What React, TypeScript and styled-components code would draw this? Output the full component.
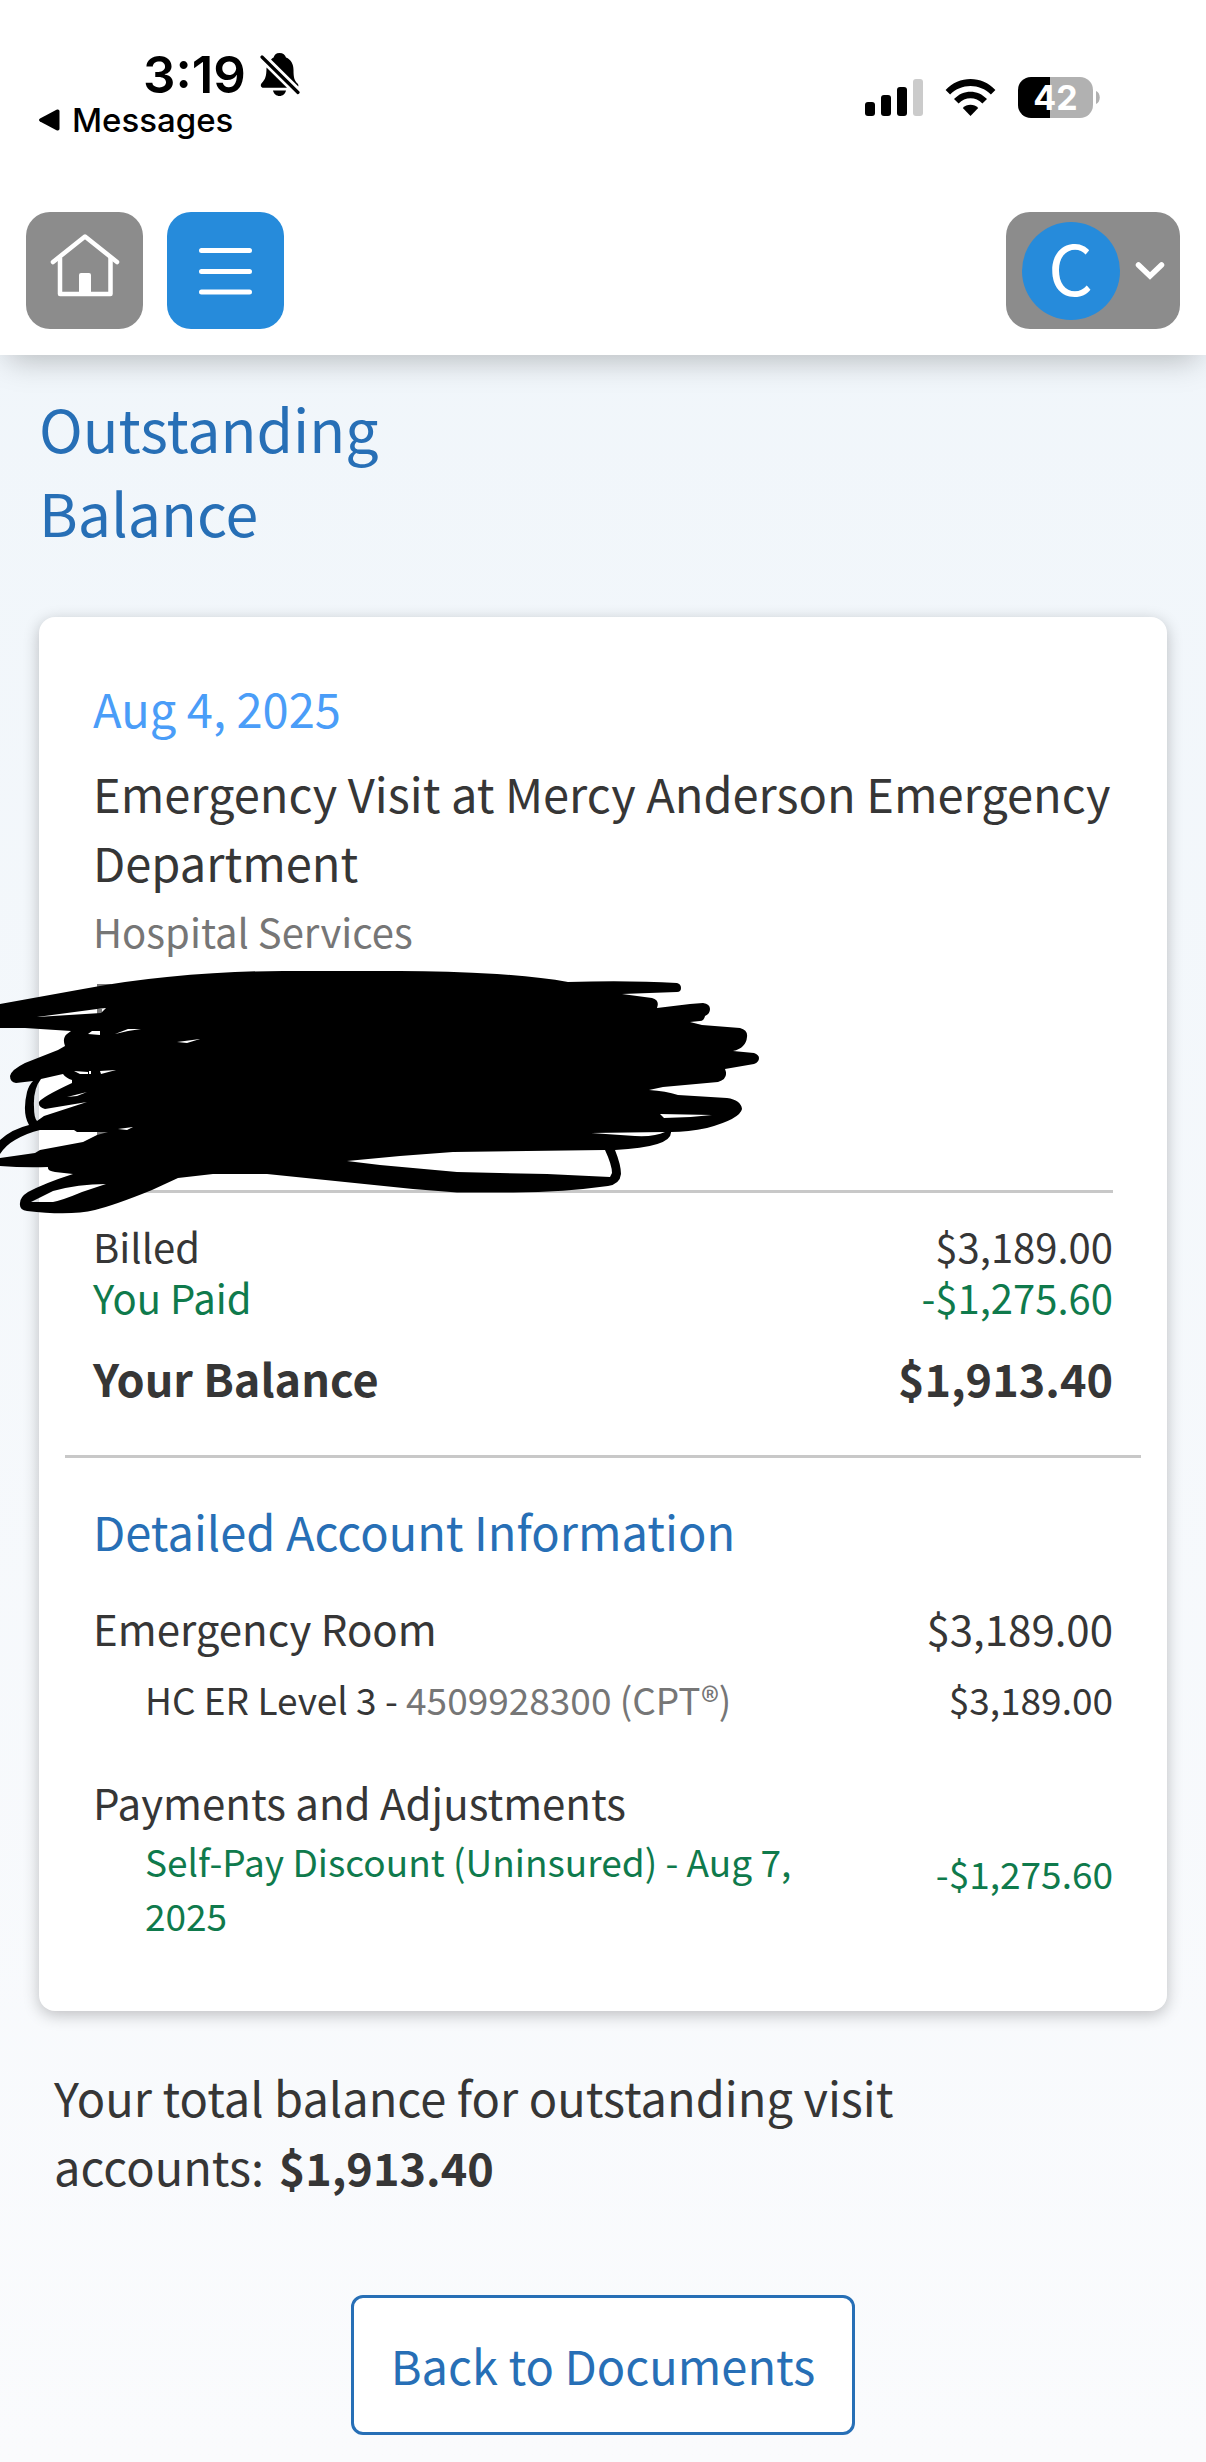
import React from "react";
import styled, { createGlobalStyle } from "styled-components";

const color = {
  ink: "#363636",
  muted: "#767676",
  link: "#276fb6",
  date: "#4a9df8",
  credit: "#0f7a4c",
  rule: "#c8c8c8",
  brand: "#268bdb",
  grey: "#8c8c8c",
};

const Global = createGlobalStyle`
  *, *::before, *::after { box-sizing: border-box; }
  html { background: #fafbfd; }
  body {
    margin: 0;
    color: ${color.ink};
    font-family: "Noto Sans CJK SC", "Open Sans", sans-serif;
    font-size: 40px;
  }
  button { font: inherit; color: inherit; cursor: pointer; }
  h1, h2, h3, p { margin: 0; font-weight: 400; }
`;

const Page = styled.div`
  min-height: 100vh;
  padding-bottom: 28px;
  overflow-x: hidden;
  background: linear-gradient(#eff5fa, #fafbfd);
`;

const Top = styled.header`
  position: relative;
  background: #fff;
  padding-bottom: 26px;
  box-shadow: 0 12px 30px -8px rgba(0, 0, 0, 0.26);
`;

const StatusBar = styled.div`
  display: flex;
  justify-content: space-between;
  padding: 48px 106px 66px 39px;
  color: #000;
  font-family: Inter, "Liberation Sans", sans-serif;
`;

const Clock = styled.div`
  display: flex;
  align-items: center;
  gap: 14px;
  padding-left: 104px;
  font-size: 51px;
  line-height: 54px;
  font-weight: 600;
`;

const BackLink = styled.button`
  display: flex;
  align-items: center;
  gap: 12px;
  padding: 0;
  border: 0;
  background: none;
  color: #000;
  font-size: 33px;
  line-height: 36px;
  font-weight: 500;
`;

const StatusIcons = styled.div`
  display: flex;
  align-items: center;
  gap: 22px;
  height: 98px;
`;

const Battery = styled.div`
  display: flex;
  align-items: center;
  gap: 3px;
`;

const Charge = styled.span`
  width: 75px;
  height: 41px;
  border-radius: 13px;
  background: linear-gradient(90deg, #000 43%, #b1b1b1 43%);
  color: #fff;
  font-size: 34px;
  line-height: 41px;
  font-weight: 700;
  text-align: center;
`;

const Nav = styled.nav`
  display: flex;
  gap: 24px;
  padding: 0 26px;
`;

const Tile = styled.button<{ $fill: string }>`
  display: flex;
  align-items: center;
  justify-content: center;
  width: 117px;
  height: 117px;
  padding: 0;
  border: 0;
  border-radius: 24px;
  background: ${(p) => p.$fill};
`;

const Account = styled(Tile)`
  width: 174px;
  gap: 15px;
  margin-left: auto;
`;

const Avatar = styled.span`
  width: 98px;
  height: 98px;
  border-radius: 50%;
  background: ${color.brand};
  color: #fff;
  font-size: 70px;
  line-height: 88px;
`;

const Main = styled.main`
  padding: 31px 39px 0;
`;

const Title = styled.h1`
  max-width: 400px;
  margin-bottom: 63px;
  color: ${color.link};
  font-size: 59px;
  line-height: 84px;
`;

const Card = styled.section`
  padding: 56px 26px 69px;
  border-radius: 16px;
  background: #fff;
  box-shadow: 0 4px 16px rgba(0, 0, 0, 0.24);
`;

const Block = styled.div`
  padding: 0 28px;
`;

const Large = styled.h2<{ $tone?: string }>`
  color: ${(p) => p.$tone ?? color.ink};
  font-size: 47px;
  line-height: 69px;
`;

const VisitDate = styled(Large).attrs({ as: "p" })`
  margin-bottom: 16px;
`;

const Service = styled.p`
  margin-top: 9px;
  color: ${color.muted};
  line-height: 52px;
`;

const Redacted = styled.div`
  position: relative;
  height: 233px;
`;

const Scribble = styled.svg`
  position: absolute;
  left: -93px;
  top: 8px;
  pointer-events: none;
`;

const Rule = styled.hr`
  height: 3px;
  margin: 0;
  border: 0;
  background: ${color.rule};
`;

const Summary = styled.table`
  width: 100%;
  margin: 28px 0 43px;
  border-collapse: collapse;
`;

const Details = styled.table`
  width: 100%;
  margin-top: 33px;
  border-collapse: collapse;
`;

type Size = "base" | "total" | "group" | "item";

const sizes: Record<Size, string> = {
  base: "font-size: 40px; line-height: 51px;",
  total: "font-size: 45px; line-height: 69px; font-weight: 600;",
  group: "font-size: 42px; line-height: 60px;",
  item: "font-size: 37px; line-height: 54px;",
};

const Row = styled.tr<{ $size: Size; $tone?: string; $above: number; $drop: number }>`
  color: ${(p) => p.$tone ?? color.ink};
  font-weight: 400;
  ${(p) => sizes[p.$size]}
  th {
    padding: ${(p) => p.$above}px 0 0;
    padding-left: ${(p) => (p.$size === "item" ? 52 : 0)}px;
    padding-right: ${(p) => (p.$size === "item" ? 100 : 0)}px;
    font-weight: inherit;
    text-align: left;
  }
  td {
    padding: ${(p) => p.$above + p.$drop}px 0 0;
    text-align: right;
    vertical-align: top;
    white-space: nowrap;
  }
`;

const Code = styled.span`
  color: ${color.muted};
`;

const DetailsHeading = styled(Large)`
  margin-top: 38px;
`;

const Total = styled.p`
  max-width: 900px;
  margin: 51px 0 94px;
  padding: 0 15px;
  font-size: 47px;
  line-height: 69px;
`;

const Strong = styled.strong`
  margin-left: 4px;
  font-size: 45px;
  font-weight: 600;
`;

const BackButton = styled.button`
  display: block;
  margin: 0 auto;
  padding: 0 37px;
  border: 3px solid ${color.link};
  border-radius: 12px;
  background: #fff;
  color: ${color.link};
  font-size: 47px;
  line-height: 134px;
`;

const BellOff = () => (
  <svg width="40" height="44" viewBox="0 0 40 44" aria-label="Silent mode" role="img">
    <path d="M19.500 0c3.600 0 5.700 2 6.500 4.500 5 2 7.500 6.500 7.500 12.500 0 8 1 10.500 4 13.500 1 1 1 2 .8 3L11 6.500c1-1 1.700-1.600 2.600-2C14.400 2 16 0 19.500 0Z" />
    <path d="M6.500 14.500 27 34.800H3.500C.8 34.800 0 32 1.800 30c3.400-3.500 4.700-6.500 4.700-15.500Z" />
    <path d="M13 37.500h13c-.7 3.300-3.300 5.500-6.500 5.500s-5.800-2.200-6.500-5.500Z" />
    <path d="M2 4l36 35.500" stroke="#000" strokeWidth="3.200" strokeLinecap="round" />
  </svg>
);

const BackArrow = () => (
  <svg width="21" height="22" viewBox="0 0 21 22" aria-hidden="true">
    <path d="M1 9.500 17.500.8c1.800-.8 3 0 3 1.700v17c0 1.700-1.200 2.500-3 1.700L1 12.500c-1.300-.8-1.300-2.200 0-3Z" />
  </svg>
);

const Signal = () => (
  <svg width="58" height="39" viewBox="0 0 58 39" aria-label="Signal" role="img">
    <rect x="0" y="24" width="10" height="14" rx="3" />
    <rect x="16" y="17" width="10" height="21" rx="3" />
    <rect x="32" y="9" width="10" height="29" rx="3" />
    <rect x="48" y="1" width="10" height="37" rx="3" fill="#cbcbcb" />
  </svg>
);

const Wifi = () => (
  <svg width="51" height="39" viewBox="0 0 51 39" aria-label="Wi-Fi" role="img">
    <path d="M.6 12C14-2.800 37-2.800 50.400 12l-4.500 4.600c-11.200-11.500-29.600-11.500-40.800 0Z" />
    <path d="M9 21c9.200-9.800 23.800-9.800 33 0l-4.600 4.600c-6.500-7-17.300-7-23.800 0Z" />
    <path d="M17.800 30c4-4.400 11.400-4.400 15.400 0L25.500 38Z" />
  </svg>
);

const BatteryTip = () => (
  <svg width="4" height="13" viewBox="0 0 4 13" aria-hidden="true">
    <path d="M0 0c5 2 5 11 0 13Z" fill="#b1b1b1" />
  </svg>
);

const House = () => (
  <svg width="70" height="76" viewBox="0 0 70 76" fill="none" stroke="#fff" strokeLinecap="round" strokeLinejoin="round">
    <path d="M3 29 35 3.500 67 29" strokeWidth="4.500" />
    <path d="M10 25v36h50.500V25" strokeWidth="4.500" />
    <path d="M31 42h8v18h-8Z" fill="#fff" strokeWidth="4" />
  </svg>
);

const Bars = () => (
  <svg width="53" height="48" viewBox="0 0 53 48" stroke="#fff" strokeWidth="5" strokeLinecap="round">
    <path d="M2.500 3.500h48M2.500 24.500h48M2.500 45h48" />
  </svg>
);

const Chevron = () => (
  <svg width="30" height="20" viewBox="0 0 30 20" fill="none" stroke="#fff" strokeWidth="5.500" strokeLinecap="round">
    <path d="M3.500 4 15 15 26.500 4" />
  </svg>
);

const Marker = () => (
  <Scribble width="762" height="252" viewBox="0 965 762 252" role="img" aria-label="Redacted details">
    <path d="M97 984h14v3H97zM97 1009h5v8H97zM97 1131h12v4H97z" fill="#777" />
    <path
      fillRule="evenodd"
      d="M0 1004 83 989Q125 981 167 977Q230 971 283 971H400Q447 971 497 974Q540 977 568 982Q627 980 677 983Q681 984 681 988Q681 992 677 992L622 994 652 998Q660 1000 657 1008L690 1004 703 1003Q710 1004 710 1009Q710 1014 705 1016 704 1021 700 1021L690 1022 702 1025 740 1028Q748 1030 747 1037Q746 1048 733 1051L754 1053Q759 1055 759 1058Q759 1062 754 1064L725 1069Q729 1079 718 1082L663 1087 649 1090Q666 1091 678 1095L727 1098Q741 1100 742 1109Q740 1119 707 1128Q688 1132 671 1132Q672 1147 615 1150Q621 1165 621 1174Q620 1184 608 1186Q565 1192 513 1192.500H457L413 1189 267 1174H213L178 1178 152 1190Q115 1205 95 1210Q70 1216 27 1211Q19 1210 20 1203Q20 1197 28 1192Q45 1183 73 1174L55 1172Q47 1171 48 1167Q25 1168 0 1166V1158L35 1153 40 1150 83 1142 97 1135 108 1132 77 1132 74 1130H40Q27 1133 15 1140 6 1145 0 1154V1140Q12 1129 29 1125 22 1113 27 1092Q29 1085 33 1081L16 1083Q10 1082 10 1076Q11 1070 25 1063L58 1050 65 1046Q62 1038 67 1034L71 1031 25 1028H0ZM41 1079Q33 1089 34 1107Q34 1118 37 1121L44 1116 87 1102 45 1109Q38 1107 39 1102Q42 1097 72 1083V1080Q66 1078 63 1074ZM37 1017 97 1009 106 1008 101 1013ZM88 1034 92 1031H100V1035ZM115 1034 128 1029 141 1029 128 1031ZM177 1042 200 1039 187 1043ZM74 1071 88 1072V1074H80ZM89 1071H91V1074H89ZM100 1071 116 1070 101 1074ZM67 1097 87 1092 77 1096ZM118 1129 133 1127 127 1130ZM31 1202 53 1191Q78 1184 106 1184L82 1192Q63 1200 53 1202ZM660 1114 712 1115Q688 1118 664 1118ZM591 1133 665 1132Q655 1137 635 1136ZM347 1161 400 1156 453 1152 605 1150Q612 1165 612 1173L610 1177 547 1174 457 1172 380 1165Z"
    />
  </Scribble>
);

interface Line {
  label: React.ReactNode;
  amount?: string;
  size: Size;
  tone?: string;
  above?: number;
  drop?: number;
}

const summary: Line[] = [
  { label: "Billed", amount: "$3,189.00", size: "base" },
  { label: "You Paid", amount: "-$1,275.60", size: "base", tone: color.credit },
  { label: "Your Balance", amount: "$1,913.40", size: "total", above: 20 },
];

const details: Line[] = [
  { label: "Emergency Room", amount: "$3,189.00", size: "group" },
  {
    label: (
      <>
        HC ER Level 3 - <Code>4509928300 (CPT®)</Code>
      </>
    ),
    amount: "$3,189.00",
    size: "item",
    above: 14,
  },
  { label: "Payments and Adjustments", size: "group", above: 46 },
  {
    label: "Self-Pay Discount (Uninsured) - Aug 7, 2025",
    amount: "-$1,275.60",
    size: "item",
    tone: color.credit,
    above: 2,
    drop: 12,
  },
];

const Lines = ({ lines }: { lines: Line[] }) => (
  <tbody>
    {lines.map((l, i) => (
      <Row key={i} $size={l.size} $tone={l.tone} $above={l.above ?? 0} $drop={l.drop ?? 0}>
        <th scope="row">{l.label}</th>
        <td>{l.amount}</td>
      </Row>
    ))}
  </tbody>
);

export default function App() {
  return (
    <Page>
      <Global />
      <Top>
        <StatusBar>
          <div>
            <Clock>
              3:19
              <BellOff />
            </Clock>
            <BackLink>
              <BackArrow />
              Messages
            </BackLink>
          </div>
          <StatusIcons>
            <Signal />
            <Wifi />
            <Battery>
              <Charge>42</Charge>
              <BatteryTip />
            </Battery>
          </StatusIcons>
        </StatusBar>
        <Nav>
          <Tile $fill={color.grey} aria-label="Home">
            <House />
          </Tile>
          <Tile $fill={color.brand} aria-label="Menu">
            <Bars />
          </Tile>
          <Account $fill={color.grey} aria-label="Account">
            <Avatar>C</Avatar>
            <Chevron />
          </Account>
        </Nav>
      </Top>
      <Main>
        <Title>Outstanding Balance</Title>
        <Card>
          <Block>
            <VisitDate $tone={color.date}>Aug 4, 2025</VisitDate>
            <Large>Emergency Visit at Mercy Anderson Emergency Department</Large>
            <Service>Hospital Services</Service>
            <Redacted>
              <Marker />
            </Redacted>
            <Rule />
            <Summary>
              <Lines lines={summary} />
            </Summary>
          </Block>
          <Rule />
          <Block>
            <DetailsHeading $tone={color.link}>Detailed Account Information</DetailsHeading>
            <Details>
              <Lines lines={details} />
            </Details>
          </Block>
        </Card>
        <Total>
          Your total balance for outstanding visit accounts: <Strong>$1,913.40</Strong>
        </Total>
        <BackButton>Back to Documents</BackButton>
      </Main>
    </Page>
  );
}
